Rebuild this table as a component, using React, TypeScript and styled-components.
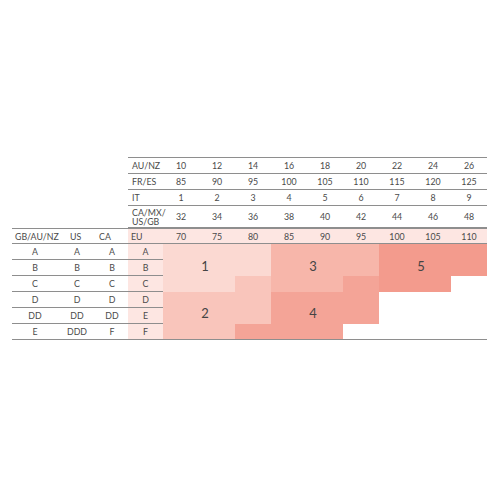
import React from "react";
import styled, { createGlobalStyle } from "styled-components";

const GlobalStyle = createGlobalStyle`
  body {
    margin: 0;
    background: #ffffff;
    font-family: Lato, "Open Sans", sans-serif;
  }
`;

const COLORS: Record<number, string> = {
  0: "#ffffff",
  1: "#fbd9d2",
  2: "#f9c5bb",
  3: "#f7b6aa",
  4: "#f4a497",
  5: "#f39b8d",
};

const EU_PINK = "#fde6e2";
const LINE = "1px solid #8e8e8e";

const topRows = [
  { label: "AU/NZ", values: ["10", "12", "14", "16", "18", "20", "22", "24", "26"] },
  { label: "FR/ES", values: ["85", "90", "95", "100", "105", "110", "115", "120", "125"] },
  { label: "IT", values: ["1", "2", "3", "4", "5", "6", "7", "8", "9"] },
  { label: "CA/MX/\nUS/GB", values: ["32", "34", "36", "38", "40", "42", "44", "46", "48"] },
];

const euValues = ["70", "75", "80", "85", "90", "95", "100", "105", "110"];

const cupRows = [
  { sizes: ["A", "A", "A", "A"], fill: [1, 1, 1, 3, 3, 3, 5, 5, 5] },
  { sizes: ["B", "B", "B", "B"], fill: [1, 1, 1, 3, 3, 3, 5, 5, 5] },
  { sizes: ["C", "C", "C", "C"], fill: [1, 1, 2, 3, 3, 4, 5, 5, 0] },
  { sizes: ["D", "D", "D", "D"], fill: [2, 2, 2, 4, 4, 4, 0, 0, 0] },
  { sizes: ["DD", "DD", "DD", "E"], fill: [2, 2, 2, 4, 4, 4, 0, 0, 0] },
  { sizes: ["E", "DDD", "F", "F"], fill: [2, 2, 4, 4, 4, 0, 0, 0, 0] },
];

const headers = [
  { text: "GB/AU/NZ", pad: 3 },
  { text: "US", pad: 12 },
  { text: "CA", pad: 3 },
];

const labels = [
  { n: "1", col: 5, row: 6, drop: 4 },
  { n: "3", col: 8, row: 6, drop: 4 },
  { n: "5", col: 11, row: 6, drop: 4 },
  { n: "2", col: 5, row: 9, drop: 6 },
  { n: "4", col: 8, row: 9, drop: 6 },
];

const Chart = styled.div`
  display: grid;
  grid-template-columns: 46px 38px 32px 35px repeat(9, 36px);
  grid-template-rows: 17px 16px 16px 22px repeat(7, 16px);
  padding: 157px 0 0 12px;
  color: #4a4a4a;
  font-weight: 400;
  font-size: 8.8px;
  -webkit-font-smoothing: antialiased;
`;

type CellProps = {
  $row: number;
  $col: number;
  $bg?: string;
  $line?: boolean;
  $top?: boolean;
  $left?: boolean;
  $pad?: number;
};

const Cell = styled.div<CellProps>`
  grid-row: ${({ $row }) => $row};
  grid-column: ${({ $col }) => $col};
  box-sizing: border-box;
  display: flex;
  align-items: center;
  justify-content: ${({ $left }) => ($left ? "flex-start" : "center")};
  padding-left: ${({ $pad }) => $pad ?? 0}px;
  background: ${({ $bg }) => $bg ?? "transparent"};
  border-bottom: ${({ $line }) => ($line ? LINE : "0")};
  border-top: ${({ $top }) => ($top ? LINE : "0")};
  white-space: pre;
  line-height: 9px;
`;

const BlockLabel = styled.div<{ $row: number; $col: number; $drop: number }>`
  grid-row: ${({ $row }) => `${$row} / span 3`};
  grid-column: ${({ $col }) => `${$col} / span 3`};
  z-index: 1;
  width: 84px;
  display: flex;
  align-items: center;
  justify-content: center;
  padding-bottom: ${({ $drop }) => $drop}px;
  font-size: 13px;
  font-weight: 400;
  color: #444444;
`;

const App = () => {
  return (
    <>
      <GlobalStyle />
      <Chart>
        {topRows.map((r, ri) => (
          <React.Fragment key={r.label}>
            <Cell $row={ri + 1} $col={4} $line $top={ri === 0} $left $pad={4}>
              {r.label}
            </Cell>
            {r.values.map((v, vi) => (
              <Cell key={vi} $row={ri + 1} $col={vi + 5} $line $top={ri === 0}>
                {v}
              </Cell>
            ))}
          </React.Fragment>
        ))}

        {headers.map((h, hi) => (
          <Cell key={h.text} $row={5} $col={hi + 1} $line $top $left $pad={h.pad}>
            {h.text}
          </Cell>
        ))}
        <Cell $row={5} $col={4} $line $top $left $pad={3} $bg={EU_PINK}>
          EU
        </Cell>
        {euValues.map((v, vi) => (
          <Cell key={v} $row={5} $col={vi + 5} $line $top $bg={EU_PINK}>
            {v}
          </Cell>
        ))}

        {cupRows.map((r, ri) => {
          const last = ri === cupRows.length - 1;
          return (
            <React.Fragment key={ri}>
              {r.sizes.map((s, si) => (
                <Cell
                  key={si}
                  $row={ri + 6}
                  $col={si + 1}
                  $line
                  $bg={si === 3 ? EU_PINK : undefined}
                >
                  {s}
                </Cell>
              ))}
              {r.fill.map((f, fi) => (
                <Cell
                  key={`f${fi}`}
                  $row={ri + 6}
                  $col={fi + 5}
                  $line={last}
                  $bg={COLORS[f]}
                />
              ))}
            </React.Fragment>
          );
        })}

        {labels.map((l) => (
          <BlockLabel key={l.n} $row={l.row} $col={l.col} $drop={l.drop}>
            {l.n}
          </BlockLabel>
        ))}
      </Chart>
    </>
  );
};

export default App;
